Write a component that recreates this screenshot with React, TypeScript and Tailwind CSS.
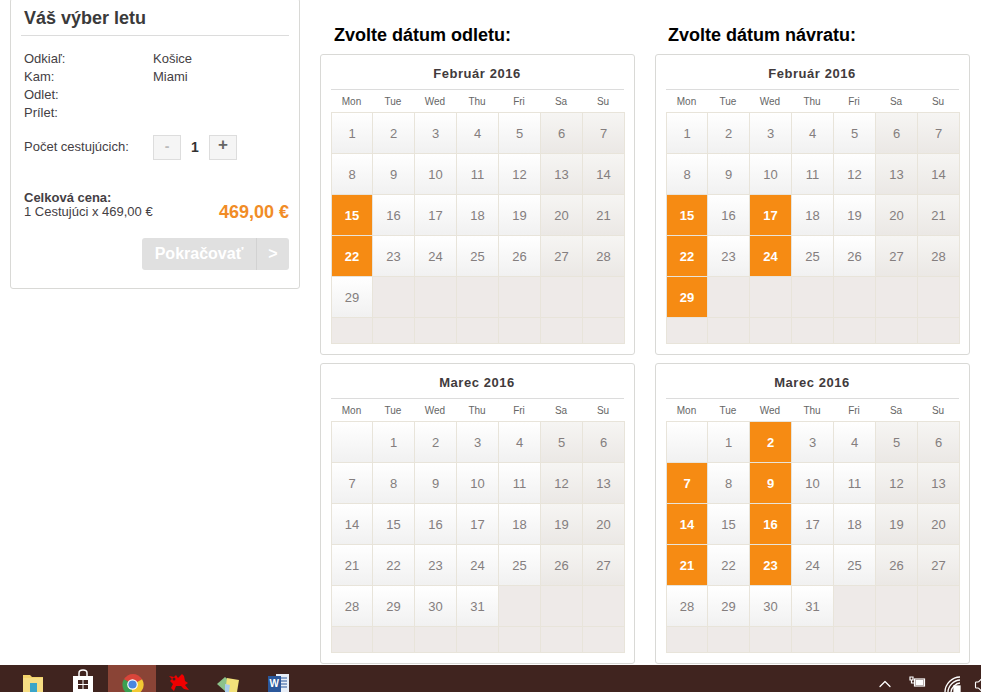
import React from 'react';
import { ChevronUp, Volume1 } from 'lucide-react';

const DAYS = ['Mon', 'Tue', 'Wed', 'Thu', 'Fri', 'Sa', 'Su'];

type CalProps = { title: string; offset: number; total: number; picked?: number[] };

const Calendar: React.FC<CalProps> = ({ title, offset, total, picked = [] }) => {
  const cells: (number | null)[] = [];
  for (let i = 0; i < offset; i++) cells.push(null);
  for (let d = 1; d <= total; d++) cells.push(d);
  while (cells.length < 35) cells.push(null);

  return (
    <div className="h-[301px] rounded-[3px] border border-[#d9d9d6] bg-white px-[10px]">
      <div className="flex h-[35px] items-center justify-center border-b border-[#dcdcdc] pr-[1px] pt-[3px] text-[13px] font-bold tracking-[0.55px] text-[#413a3c]">
        {title}
      </div>
      <div className="grid h-[22px] grid-cols-[41px_repeat(6,42px)] items-center text-center text-[10px] text-[#666666]">
        {DAYS.map(d => <span key={d}>{d}</span>)}
      </div>
      <div className="grid w-[294px] grid-cols-[41px_repeat(6,42px)] border-l border-t border-[#e8e4da]">
        {cells.map((d, i) => {
          const col = i % 7;
          const isPicked = d !== null && picked.includes(d);
          let look = 'bg-gradient-to-b from-white to-[#f1f1f1] text-[#847e7e]';
          if (isPicked) look = 'bg-[#f68b13] font-bold text-white';
          else if (d === null && i >= offset) look = 'bg-[#eeeae8]';
          else if (col >= 5) look = 'bg-gradient-to-b from-[#f6f5f3] to-[#ebe8e5] text-[#847e7e]';
          return (
            <div
              key={i}
              className={`flex h-[41px] items-center justify-center border-b border-r border-[#e8e4da] pt-[1px] text-[13px] ${look}`}
            >
              {d}
            </div>
          );
        })}
        {DAYS.map(d => (
          <div key={d} className="h-[26px] border-b border-r border-[#e8e4da] bg-[#eeeae8]" />
        ))}
      </div>
    </div>
  );
};

const Row: React.FC<{ label: string; value?: string }> = ({ label, value }) => (
  <div className="flex h-[18px] items-center">
    <span className="w-[129px]">{label}</span>
    <span>{value}</span>
  </div>
);

const Summary = () => (
  <aside className="-mt-[2px] h-[291px] w-[290px] shrink-0 rounded-[3px] border border-[#d9d9d6] bg-white pl-[10px] pr-[10px] text-[13px] text-[#444044]">
    <h2 className="flex h-[37px] items-end border-b border-[#dcdcdc] pb-[3px] pl-[3px] text-[18px] font-bold text-[#3a3a3a]">
      Váš výber letu
    </h2>
    <div className="mt-[14px] pl-[3px]">
      <Row label="Odkiaľ:" value="Košice" />
      <Row label="Kam:" value="Miami" />
      <Row label="Odlet:" />
      <Row label="Prílet:" />
    </div>
    <div className="mt-[13px] flex h-[25px] items-center pl-[3px]">
      <span className="w-[129px] pb-[2px]">Počet cestujúcich:</span>
      <span className="flex h-[25px] w-[28px] items-center justify-center border border-[#dddddd] bg-[#f5f5f5] pb-[2px] text-[14px] font-bold text-[#bbbbbb]">-</span>
      <span className="w-[28px] text-center text-[14px] font-bold text-[#333333]">1</span>
      <span className="flex h-[25px] w-[28px] items-center justify-center border border-[#dddddd] bg-[#f5f5f5] pb-[5px] text-[17px] font-bold text-[#666666]">+</span>
    </div>
    <div className="mt-[31px] flex items-end justify-between">
      <div className="pl-[3px] leading-[14px]">
        <div className="font-bold">Celková cena:</div>
        <div>1 Cestujúci x 469,00 €</div>
      </div>
      <div className="text-[18px] font-bold leading-[14px] text-[#f18c26]">469,00 €</div>
    </div>
    <div className="mt-[19px] flex justify-end">
      <div className="flex h-[32px] w-[147px] items-center rounded-[3px] bg-[#e0e0e0] text-[16px] font-bold text-white">
        <span className="w-[115px] border-r border-[#d2d2d2] text-center leading-[32px]">Pokračovať</span>
        <span className="flex-1 text-center">&gt;</span>
      </div>
    </div>
  </aside>
);

const Taskbar = () => (
  <footer className="relative flex h-[27px] shrink-0 items-start overflow-hidden bg-[#40241f]">
    <div className="ml-[22px] flex h-[27px] w-[24px] items-start pt-[10px]">
      <svg width="22" height="17" viewBox="0 0 22 17">
        <path d="M1 0h7l2 2h11v15H1z" fill="#f3d36b" />
        <rect x="1" y="3" width="20" height="14" fill="#f6dd84" />
        <rect x="8" y="8" width="7" height="9" fill="#3aa5c9" />
      </svg>
    </div>
    <div className="ml-[26px] flex h-[27px] w-[22px] justify-center pt-[4px]">
      <svg width="22" height="23" viewBox="0 0 22 23">
        <path d="M7 7V4c0-4 8-4 8 0v3" fill="none" stroke="#fff" strokeWidth="1.5" />
        <path d="M1 7h20v16H1z" fill="#fff" />
        <path d="M6 11h4.500v4H6zM11.500 11H16v4h-4.500zM6 16h4.500v4H6zM11.500 16H16v4h-4.500z" fill="#40241f" />
      </svg>
    </div>
    <div className="ml-[14px] flex h-[27px] w-[48px] justify-center bg-[#8a4436] pt-[8px]">
      <svg width="23" height="23" viewBox="0 0 24 24">
        <path d="M12 12 L3 6.500A11 11 0 0 1 22 6.500z" fill="#d9453a" />
        <path d="M3 6.500A11 11 0 0 0 11 23L13 12z" fill="#3b9f52" />
        <path d="M22 6.500A11 11 0 0 1 11 23L12 12z" fill="#f2c933" />
        <circle cx="12" cy="12" r="5.500" fill="#fff" />
        <circle cx="12" cy="12" r="4.300" fill="#4a86e0" />
      </svg>
    </div>
    <div className="ml-[11px] flex h-[27px] w-[26px] justify-center pt-[8px]">
      <svg width="26" height="19" viewBox="0 0 26 19">
        <path d="M2 3l5 1 2-2 2 3 4-4 2 2 1 5 3 2-3 2 4 5-5-1-3-3-5 0-2 5-3-3 2-4-3-3 2-2z" fill="#f00000" />
        <circle cx="7" cy="6" r="1.500" fill="#40241f" />
      </svg>
    </div>
    <div className="ml-[24px] flex h-[27px] w-[24px] justify-center pt-[10px]">
      <svg width="24" height="17" viewBox="0 0 24 17">
        <path d="M0 9l8-7 7 6-6 9z" fill="#8cc28a" />
        <path d="M10 3l12 2-2 12H8z" fill="#f3e27a" />
        <path d="M8 9l5 1-1 7H8z" fill="#a9cdea" />
      </svg>
    </div>
    <div className="ml-[27px] flex h-[27px] w-[22px] pt-[8px]">
      <svg width="22" height="19" viewBox="0 0 22 19">
        <rect x="8" y="1" width="13" height="18" fill="#e8eef7" />
        <path d="M11 5h8M11 8h8M11 11h8M11 14h8" stroke="#2b579a" strokeWidth="1" />
        <rect x="0" y="3" width="13" height="16" fill="#2b579a" />
        <text x="1.500" y="14" fontSize="10" fontWeight="700" fill="#fff" fontFamily="Liberation Sans, sans-serif">W</text>
      </svg>
    </div>
    <div className="ml-auto flex h-[27px] shrink-0 items-start pt-[11px] text-white">
      <ChevronUp size={20} strokeWidth={1.5} className="mt-[-2px]" />
      <svg className="ml-[14px]" width="17" height="13" viewBox="0 0 17 13" fill="none" stroke="#fff" strokeWidth="1.200">
        <path d="M1 1v3h3V1zM2.500 4v3h3" />
        <rect x="5.500" y="3" width="10" height="7" />
        <rect x="7" y="4.500" width="7" height="4" fill="#fff" />
      </svg>
      <svg className="ml-[18px]" width="17" height="16" viewBox="0 0 17 16" fill="none" stroke="#fff" strokeWidth="1.300">
        <path d="M1 16C1 8 8 1 16 1M4 16C4 10 10 4 16 4M7 16c0-4 5-9 9-9" />
        <rect x="10" y="10" width="6" height="6" fill="#fff" />
      </svg>
      <Volume1 size={18} strokeWidth={1.5} className="ml-[13px] mr-[-11px]" />
    </div>
  </footer>
);

export default function App() {
  return (
    <div className="flex h-[692px] w-[981px] flex-col overflow-hidden bg-white font-['Liberation_Sans',Arial,sans-serif]">
      <main className="flex h-[665px] shrink-0 pl-[10px]">
        <Summary />
        <div className="ml-[20px] grid grid-cols-[315px_315px] gap-x-[20px]">
          <div>
            <h1 className="flex h-[54px] items-end pb-[8px] pl-[14px] text-[18px] font-bold text-black [line-height:22px]">Zvolte dátum odletu:</h1>
            <Calendar title="Február 2016" offset={0} total={29} picked={[15, 22]} />
            <div className="mt-[8px]">
              <Calendar title="Marec 2016" offset={1} total={31} />
            </div>
          </div>
          <div>
            <h1 className="flex h-[54px] items-end pb-[8px] pl-[13px] text-[18px] font-bold text-black [line-height:22px]">Zvolte dátum návratu:</h1>
            <Calendar title="Február 2016" offset={0} total={29} picked={[15, 17, 22, 24, 29]} />
            <div className="mt-[8px]">
              <Calendar title="Marec 2016" offset={1} total={31} picked={[2, 7, 9, 14, 16, 21, 23]} />
            </div>
          </div>
        </div>
      </main>
      <Taskbar />
    </div>
  );
}
